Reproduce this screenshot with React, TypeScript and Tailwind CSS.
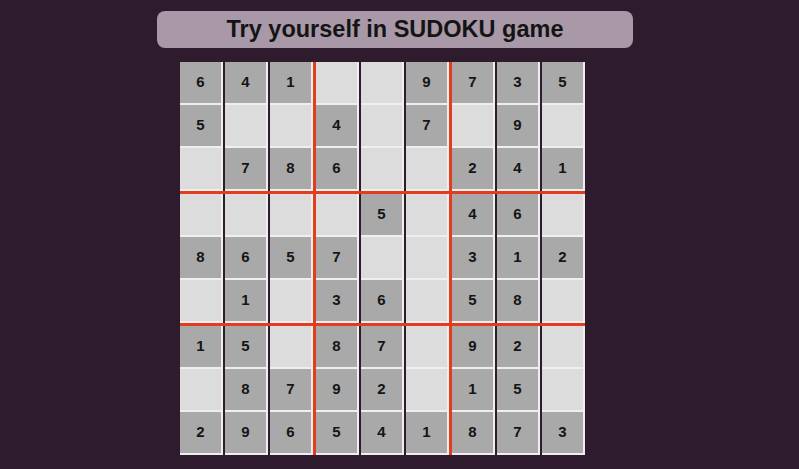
import { Fragment } from "react";

// 0 = empty cell
const board: number[][] = [
  [6, 4, 1, 0, 0, 9, 7, 3, 5],
  [5, 0, 0, 4, 0, 7, 0, 9, 0],
  [0, 7, 8, 6, 0, 0, 2, 4, 1],
  [0, 0, 0, 0, 5, 0, 4, 6, 0],
  [8, 6, 5, 7, 0, 0, 3, 1, 2],
  [0, 1, 0, 3, 6, 0, 5, 8, 0],
  [1, 5, 0, 8, 7, 0, 9, 2, 0],
  [0, 8, 7, 9, 2, 0, 1, 5, 0],
  [2, 9, 6, 5, 4, 1, 8, 7, 3],
];

function Cell({ value }: { value: number }) {
  return (
    <div
      className={
        value
          ? "w-[43px] h-[43px] flex items-center justify-center border-r-2 border-b-2 border-[#efefef] bg-[#a9a9a9] text-[15px] font-bold text-[#151515]"
          : "w-[43px] h-[43px] flex items-center justify-center border-r-2 border-b-2 border-[#efefef] bg-[#dcdcdc]"
      }
    >
      {value ? value : ""}
    </div>
  );
}

function Row({ cells }: { cells: number[] }) {
  return (
    <div className="flex">
      {cells.map((v, i) => (
        <Fragment key={i}>
          {i > 0 && (i % 3 === 0 ? <div className="w-[3px] bg-[#e23d1f]" /> : <div className="w-[2px]" />)}
          <Cell value={v} />
        </Fragment>
      ))}
    </div>
  );
}

export default function App() {
  return (
    <div className="min-h-screen w-full bg-[#2f1b2e] pt-[11px] font-['Liberation_Sans',Arial,sans-serif]">
      <div className="ml-[157px] w-[476px] h-[37px] rounded-[8px] bg-[#a898a8] flex items-center justify-center">
        <h1 className="text-[23.5px] font-bold text-[#141414] leading-none">Try yourself in SUDOKU game</h1>
      </div>

      <div className="ml-[180px] mt-[14px] w-fit flex flex-col">
        {board.map((row, r) => (
          <Fragment key={r}>
            {r > 0 && r % 3 === 0 && <div className="h-[3px] bg-[#e23d1f]" />}
            <Row cells={row} />
          </Fragment>
        ))}
      </div>
    </div>
  );
}
